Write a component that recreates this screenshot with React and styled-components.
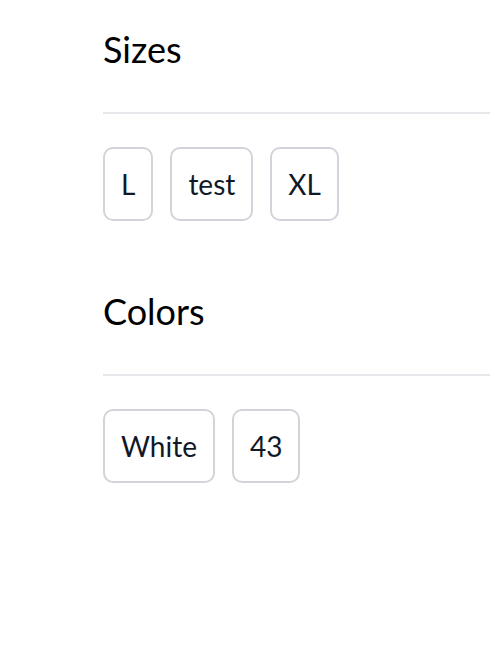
import React from "react";
import styled, { createGlobalStyle } from "styled-components";

const Global = createGlobalStyle`
  html, body { margin: 0; padding: 0; background: #ffffff; }
  body { font-family: "Lato", "Noto Sans", sans-serif; }
`;

const Page = styled.div`
  padding: 28px 0 0 103px;
  display: flex;
  flex-direction: column;
  gap: 69px;
`;

const Section = styled.section`
  display: flex;
  flex-direction: column;
`;

const Title = styled.h2`
  margin: 0;
  font-size: 36px;
  line-height: 42px;
  font-weight: 400;
  color: #000000;
  padding-bottom: 42px;
  border-bottom: 2px solid #e5e7eb;
`;

const Options = styled.div`
  display: flex;
  gap: 17px;
  margin-top: 33px;
`;

const Option = styled.button`
  font-family: inherit;
  font-size: 28px;
  line-height: 36px;
  color: #111827;
  background: #ffffff;
  border: 2px solid #d1d5db;
  border-radius: 10px;
  padding: 17px 16px;
  cursor: pointer;
`;

const groups = [
  { title: "Sizes", items: ["L", "test", "XL"] },
  { title: "Colors", items: ["White", "43"] },
];

export default function App() {
  return (
    <>
      <Global />
      <Page>
        {groups.map((g) => (
          <Section key={g.title}>
            <Title>{g.title}</Title>
            <Options>
              {g.items.map((i) => (
                <Option key={i}>{i}</Option>
              ))}
            </Options>
          </Section>
        ))}
      </Page>
    </>
  );
}
